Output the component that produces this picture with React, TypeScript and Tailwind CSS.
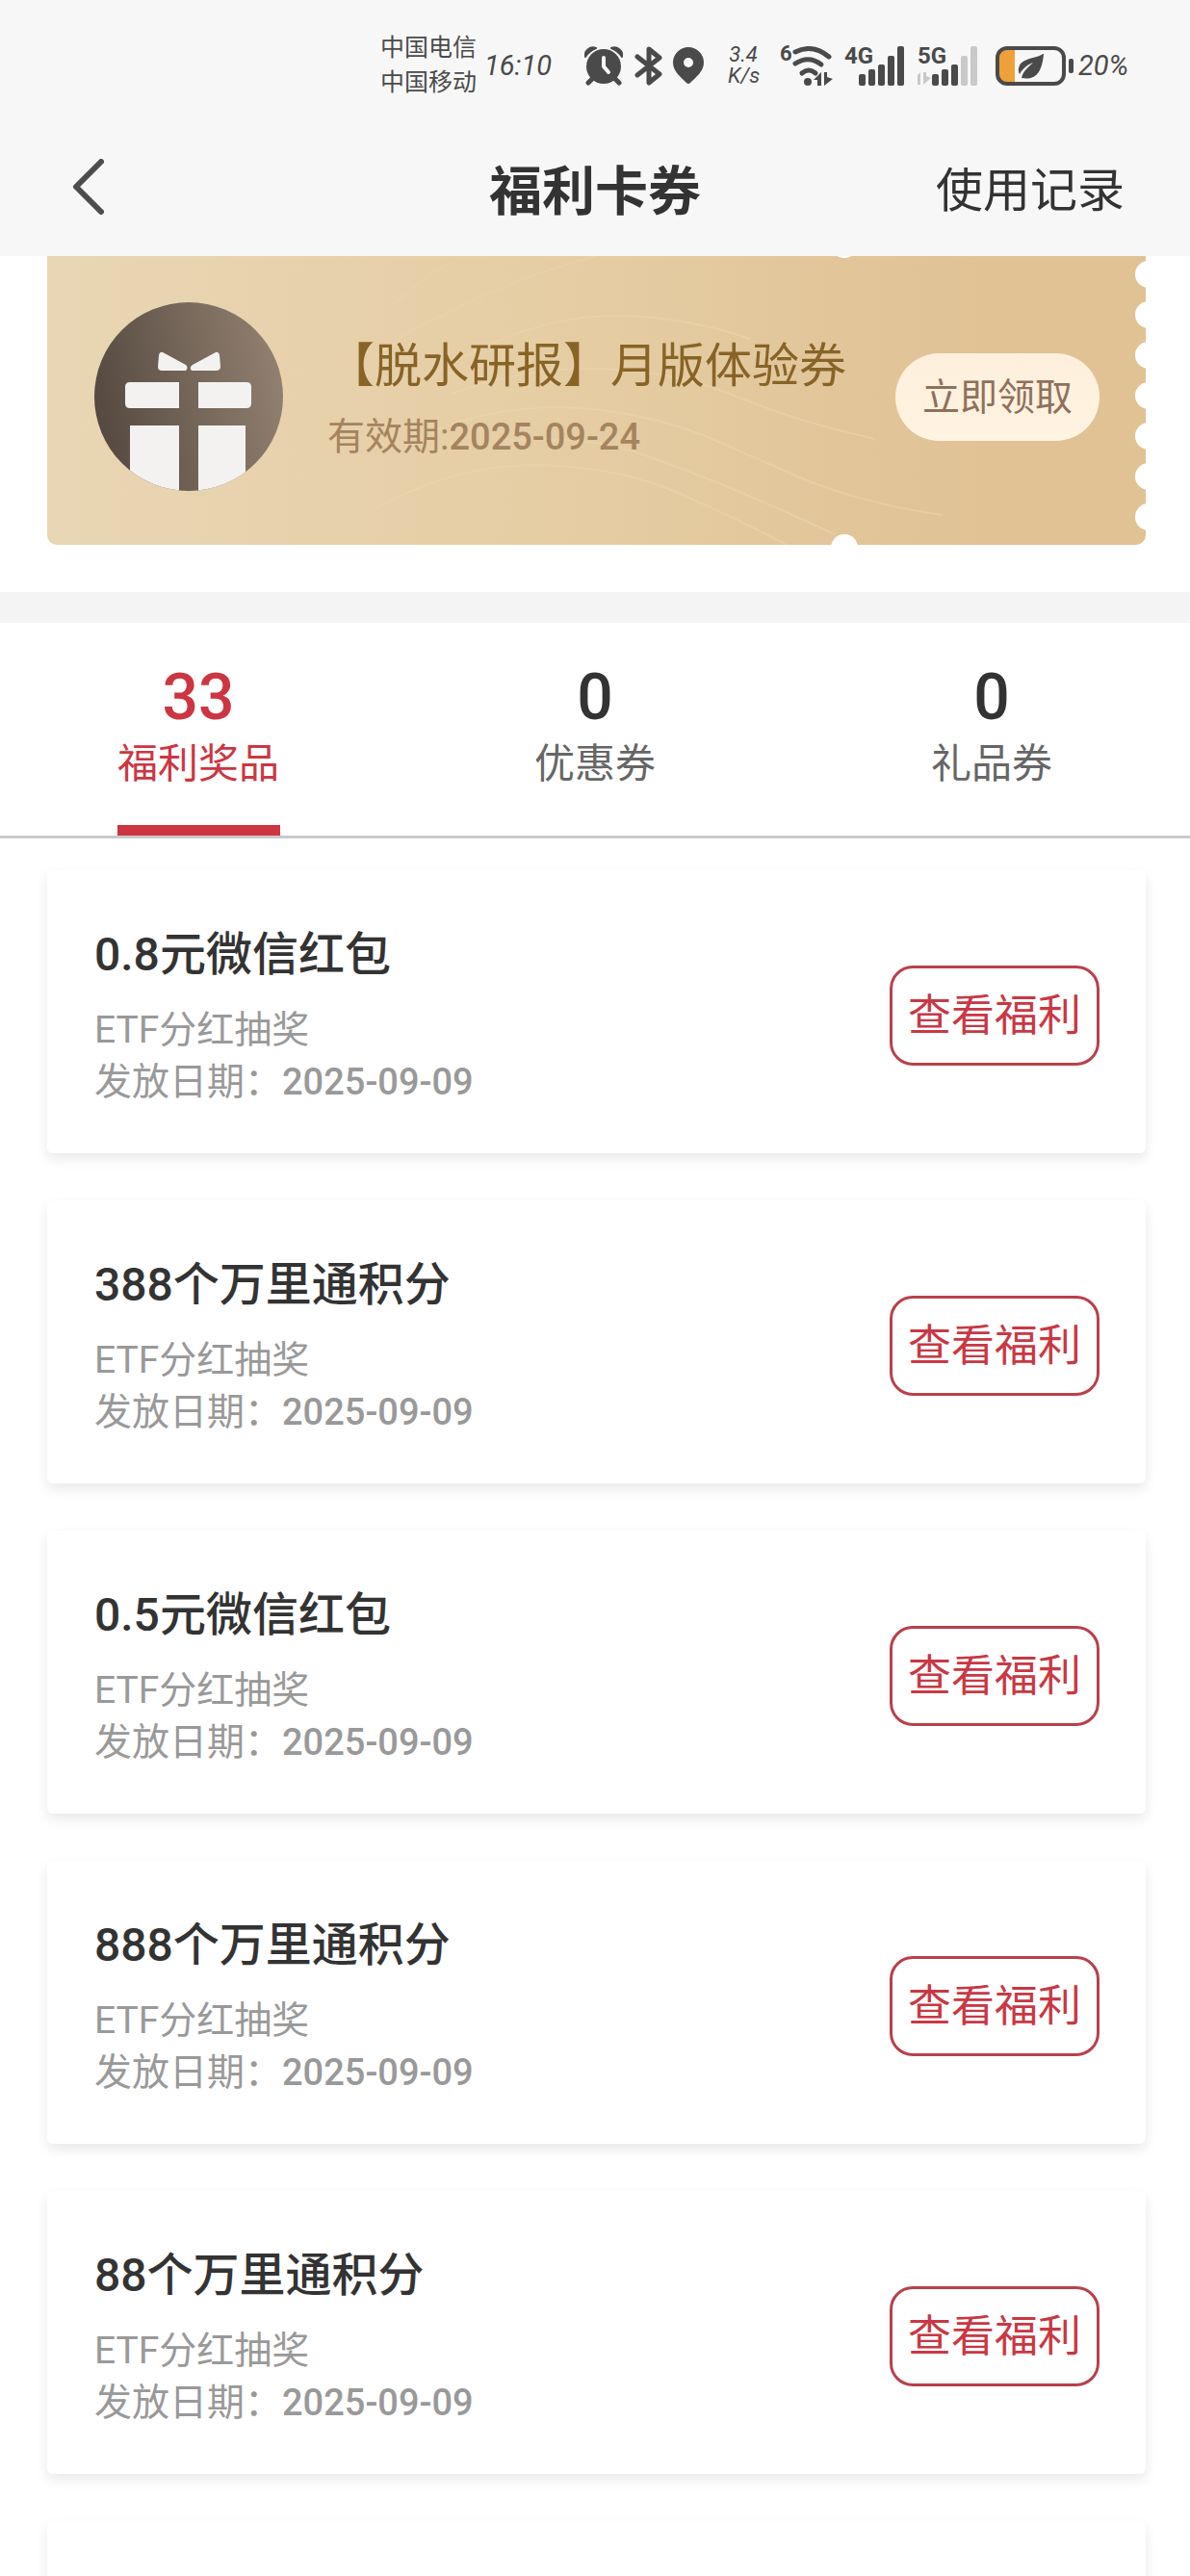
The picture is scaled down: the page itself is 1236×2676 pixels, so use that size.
import React, { useState } from 'react';

const TABS = [
  { key: 'prize', label: '福利奖品', count: 33 },
  { key: 'coupon', label: '优惠券', count: 0 },
  { key: 'gift', label: '礼品券', count: 0 },
];

const PRIZES = [
  { title: '0.8元微信红包', source: 'ETF分红抽奖', date: '2025-09-09' },
  { title: '388个万里通积分', source: 'ETF分红抽奖', date: '2025-09-09' },
  { title: '0.5元微信红包', source: 'ETF分红抽奖', date: '2025-09-09' },
  { title: '888个万里通积分', source: 'ETF分红抽奖', date: '2025-09-09' },
  { title: '88个万里通积分', source: 'ETF分红抽奖', date: '2025-09-09' },
];

const BAR_TOPS = [29, 24, 19, 10, 0];

function SignalIcon({ label, level, arrows }: { label: string; level: number; arrows?: boolean }) {
  return (
    <div className="relative h-[41px] w-[62px]">
      <span className="absolute left-0 top-0 text-2xl leading-5 font-bold">{label}</span>
      <svg className="absolute inset-0" width="62" height="41" viewBox="0 0 62 41">
        {BAR_TOPS.map((top, i) => (
          <rect
            key={top}
            x={15 + i * 10}
            y={top}
            width="7"
            height={41 - top}
            rx="2"
            fill={i < level ? '#4a4a4a' : '#c9c9c9'}
          />
        ))}
        {arrows && (
          <path d="M-5 35 L3 27 V40 H0 V35 Z M6 27 H9 V31 L14 33 L6 40 Z" fill="#c9c9c9" />
        )}
      </svg>
    </div>
  );
}

function StatusBar() {
  return (
    <div className="flex h-32 items-center justify-end pt-2 pr-[58px] text-[#4a4a4a]">
      <div className="text-[25px] leading-9">
        <p>中国电信</p>
        <p>中国移动</p>
      </div>
      <span className="ml-2 w-[72px] text-[29px] leading-10 italic">16:10</span>

      {/* 闹钟 */}
      <svg className="ml-8" width="40" height="41" viewBox="0 0 40 41">
        <circle cx="20" cy="21" r="18" fill="#4a4a4a" />
        <path d="M1 11 A8 8 0 0 1 12 2 A22 22 0 0 0 1 11 Z M39 11 A8 8 0 0 0 28 2 A22 22 0 0 1 39 11 Z" fill="#4a4a4a" stroke="#4a4a4a" strokeWidth="2" strokeLinejoin="round" />
        <path d="M8 34 L4 38 M32 34 L36 38" stroke="#4a4a4a" strokeWidth="5" strokeLinecap="round" />
        <path d="M20 12 V21 L25 27" fill="none" stroke="#f7f7f7" strokeWidth="4" strokeLinecap="round" strokeLinejoin="round" />
      </svg>
      {/* 蓝牙 */}
      <svg className="ml-3" width="30" height="41" viewBox="0 0 30 41">
        <path d="M3 11 L26 29 L15 38 V3 L26 12 L3 30" fill="none" stroke="#4a4a4a" strokeWidth="5" strokeLinecap="round" strokeLinejoin="round" />
      </svg>
      {/* 定位 */}
      <svg className="ml-[9px]" width="34" height="40" viewBox="0 0 34 40">
        <path fillRule="evenodd" d="M17 1 A16 16 0 0 1 33 17 C33 26 25 32 19 38 Q17 40 15 38 C9 32 1 26 1 17 A16 16 0 0 1 17 1 Z M17 12 A5 5 0 1 0 17 22 A5 5 0 1 0 17 12 Z" fill="#4a4a4a" />
      </svg>

      <div className="ml-6 w-8 text-center text-[22px] leading-[22px] italic">
        <p>3.4</p>
        <p>K/s</p>
      </div>

      {/* WiFi 6 */}
      <div className="relative ml-[22px] h-[41px] w-[56px]">
        <span className="absolute left-0 top-0 text-[22px] leading-4 font-bold">6</span>
        <svg className="absolute inset-0" width="56" height="41" viewBox="0 0 56 41">
          <g fill="none" stroke="#4a4a4a" strokeWidth="5" strokeLinecap="round">
            <path d="M16 6 Q34 -3 51 11" />
            <path d="M16 18 Q30 9 43 19" />
            <path d="M23 28 Q30 22 37 28" />
          </g>
          <circle cx="29" cy="37" r="4" fill="#4a4a4a" />
          <path d="M35 35 L43 27 V41 H39 V35 Z M46 27 H49 V32 L55 34 L46 41 Z" fill="#4a4a4a" />
        </svg>
      </div>

      <div className="ml-[11px] flex gap-3">
        <SignalIcon label="4G" level={5} />
        <div className="pl-[2px]">
          <SignalIcon label="5G" level={3} arrows />
        </div>
      </div>

      {/* 电池 */}
      <svg className="ml-[19px]" width="82" height="41" viewBox="0 0 82 41">
        <path d="M11 2 H20 V39 H11 Q3 38 3 30 V11 Q3 3 11 2 Z" fill="#efa03a" />
        <rect x="2" y="2" width="69" height="37" rx="10" fill="none" stroke="#4a4a4a" strokeWidth="4" />
        <rect x="76" y="13" width="5" height="15" rx="2" fill="#4a4a4a" />
        <path d="M49 8 C45 12 29 12 25 20 C23 24 24 27 25 29 C29 22 34 19 39 17 C34 22 29 25 27 33 C38 35 48 32 50 8 Z" fill="#4a4a4a" />
      </svg>
      <span className="ml-1 w-[58px] text-[29px] leading-10 italic">20%</span>
    </div>
  );
}

function NavBar() {
  return (
    <nav className="grid h-[138px] grid-cols-3 items-center px-[68px] text-[#333]">
      <button type="button" aria-label="返回" className="justify-self-start">
        <svg width="40" height="64" viewBox="0 0 40 64">
          <path d="M37 3 L11 29 L37 55" fill="none" stroke="#4d4d4d" strokeWidth="6" strokeLinecap="round" strokeLinejoin="round" />
        </svg>
      </button>
      <h1 className="pt-1 text-center text-[55px] leading-[68px] font-bold">福利卡券</h1>
      <a href="#records" className="justify-self-end pt-1 text-[49px] leading-[68px]">使用记录</a>
    </nav>
  );
}

function GiftIcon() {
  return (
    <svg className="size-[196px] shrink-0" viewBox="0 0 196 196">
      <defs>
        <linearGradient id="giftBg" x1="0" y1="0.6" x2="1" y2="0.4">
          <stop offset="0" stopColor="#544840" />
          <stop offset="0.5" stopColor="#736558" />
          <stop offset="1" stopColor="#928070" />
        </linearGradient>
        <clipPath id="giftClip">
          <circle cx="98" cy="98" r="98" />
        </clipPath>
      </defs>
      <g clipPath="url(#giftClip)">
        <rect width="196" height="196" fill="url(#giftBg)" />
        <g fill="#f3f2f1">
          <path d="M71 52 L95 65 Q98 68 95 71 H70 Q66 71 66 67 L67 55 Q68 51 71 52 Z" />
          <path d="M126 52 L102 65 Q98 68 101 71 H126 Q131 71 131 67 L130 55 Q129 51 126 52 Z" />
          <path d="M37 83 H88 V110 H37 Q32 110 32 105 V88 Q32 83 37 83 Z" />
          <path d="M108 83 H158 Q163 83 163 88 V105 Q163 110 158 110 H108 Z" />
          <rect x="37" y="128" width="51" height="68" />
          <rect x="108" y="128" width="49" height="68" />
        </g>
      </g>
    </svg>
  );
}

function CouponCard() {
  return (
    <div className="relative -mt-3 flex items-center overflow-hidden rounded-[10px] bg-linear-to-r from-[#e9d6b4] via-[#e5cca2] to-[#e0c295] to-85% pt-[60px] pr-12 pb-[56px] pl-[49px]">
      {/* 背景弧线 */}
      <svg className="absolute inset-0 size-full" viewBox="0 0 1141 312" preserveAspectRatio="none">
        <g fill="none" stroke="#ecd8ae" strokeWidth="2" strokeOpacity="0.5">
          <path d="M360 62 Q385 38 418 19" strokeOpacity="0.3" />
          <path d="M340 118 Q370 90 411 74 Q480 36 570 12" strokeOpacity="0.4" />
          <path d="M400 135 Q500 74 590 74 Q660 74 730 98" />
          <path d="M420 155 Q490 129 561 129 Q640 129 704 153 Q780 185 860 202" />
          <path d="M400 194 Q460 169 534 169 Q610 171 684 199 L784 243 Q850 270 930 281" />
          <path d="M480 204 Q560 198 618 218 Q700 246 818 301" />
          <path d="M340 275 Q420 229 510 229 Q590 231 651 256 Q715 284 768 312" />
        </g>
      </svg>
      {/* 票券缺口 */}
      <span className="absolute -top-[14px] right-[299px] size-7 rounded-full bg-white" />
      <span className="absolute -bottom-[17px] right-[299px] size-7 rounded-full bg-white" />
      <div className="absolute top-[17px] -right-[17px] flex flex-col gap-[14px]">
        {Array.from({ length: 7 }, (_, i) => (
          <span key={i} className="size-7 rounded-full bg-white" />
        ))}
      </div>

      <GiftIcon />
      <div className="relative ml-[46px] grow pt-1">
        <h2 className="text-[49px] leading-[68px] whitespace-nowrap text-[#876426]">【脱水研报】月版体验券</h2>
        <p className="mt-3 text-[39px] leading-[54px] text-[#a4845f]">
          有效期:<span className="text-[38px] font-medium">2025-09-24</span>
        </p>
      </div>
      <button
        type="button"
        className="relative h-[91px] w-[212px] shrink-0 rounded-full bg-linear-to-b from-[#fdefdc] to-[#fff4e1] pt-0.5 text-[39px] text-[#90705a]"
      >
        立即领取
      </button>
    </div>
  );
}

function PrizeCard({ title, source, date }: { title: string; source: string; date: string }) {
  return (
    <li className="flex items-center justify-between rounded-md bg-white pt-[54px] pr-12 pb-[47px] pl-[49px] shadow-[0_6px_13px_rgba(0,0,0,0.09)]">
      <div>
        <h3 className="text-5xl leading-[68px] font-medium text-[#333]">{title}</h3>
        <div className="mt-[17px] text-[39px] leading-[54px] text-[#999]">
          <p>{source}</p>
          <p>
            发放日期：<span className="text-[38px] font-medium">{date}</span>
          </p>
        </div>
      </div>
      <button
        type="button"
        className="h-[104px] w-[218px] shrink-0 rounded-3xl border-3 border-[#b9404c] pt-0.5 text-[45px] whitespace-nowrap text-[#c93844]"
      >
        查看福利
      </button>
    </li>
  );
}

export default function App() {
  const [active, setActive] = useState('prize');

  return (
    <div className="h-screen overflow-hidden bg-white font-['Roboto','Noto_Sans_CJK_SC',sans-serif]">
      <header className="relative z-10 bg-[#f7f7f7]">
        <StatusBar />
        <NavBar />
      </header>

      <section className="border-b-32 border-[#f4f4f4] pr-[46px] pb-[49px] pl-[49px]">
        <CouponCard />
      </section>

      <div role="tablist" className="grid grid-cols-3 border-b-3 border-[#cacaca]">
        {TABS.map((tab) => (
          <button
            key={tab.key}
            type="button"
            role="tab"
            aria-selected={active === tab.key}
            onClick={() => setActive(tab.key)}
            className="flex flex-col items-center pt-[39px]"
          >
            <span className={`text-[66px] leading-[78px] font-medium ${active === tab.key ? 'text-[#cc3642]' : 'text-[#333]'}`}>
              {tab.count}
            </span>
            <span className={`text-[42px] leading-[60px] ${active === tab.key ? 'text-[#cc3642]' : 'text-[#666]'}`}>
              {tab.label}
            </span>
            <span className={`mt-[33px] h-[11px] w-[169px] ${active === tab.key ? 'bg-[#cc3642]' : 'bg-transparent'}`} />
          </button>
        ))}
      </div>

      <ul className="flex flex-col gap-[49px] pt-[33px] pr-[46px] pl-[49px]">
        {PRIZES.map((prize) => (
          <PrizeCard key={prize.title} {...prize} />
        ))}
        {/* 下一条加载占位 */}
        <li aria-hidden="true" className="h-[294px] rounded-md bg-white shadow-[0_6px_13px_rgba(0,0,0,0.09)]" />
      </ul>
    </div>
  );
}
